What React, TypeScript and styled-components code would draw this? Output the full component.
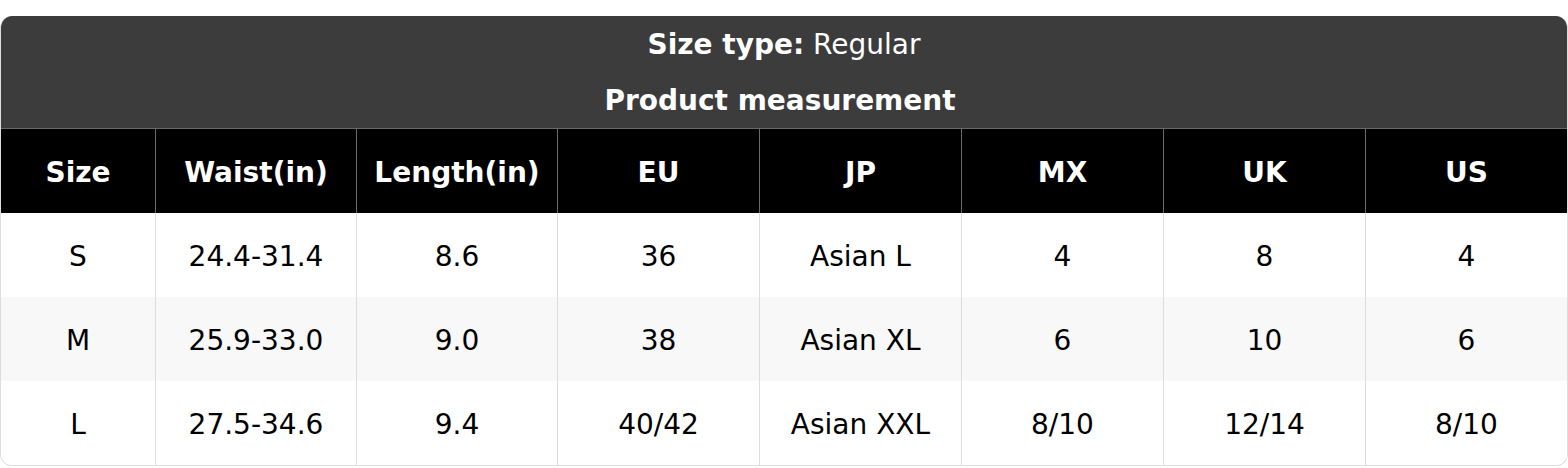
import styled, { createGlobalStyle } from 'styled-components';

const GlobalStyle = createGlobalStyle`
  html, body {
    margin: 0;
    padding: 0;
    background: #ffffff;
  }
  body {
    font-family: "DejaVu Sans", "Liberation Sans", sans-serif;
  }
`;

const columns = ['Size', 'Waist(in)', 'Length(in)', 'EU', 'JP', 'MX', 'UK', 'US'];

const rows = [
  ['S', '24.4-31.4', '8.6', '36', 'Asian L', '4', '8', '4'],
  ['M', '25.9-33.0', '9.0', '38', 'Asian XL', '6', '10', '6'],
  ['L', '27.5-34.6', '9.4', '40/42', 'Asian XXL', '8/10', '12/14', '8/10'],
];

const App = () => {
  return (
    <Page>
      <GlobalStyle />
      <Card>
        <TitleBand>
          <TitleRow>
            <strong>Size type:</strong> Regular
          </TitleRow>
          <TitleRow $divider>
            <strong>Product measurement</strong>
          </TitleRow>
        </TitleBand>
        <Grid>
          {columns.map((c, i) => (
            <HeadCell key={c} $first={i === 0}>
              {c}
            </HeadCell>
          ))}
          {rows.map((row, r) =>
            row.map((v, i) => (
              <BodyCell key={`${r}-${i}`} $first={i === 0} $striped={r % 2 === 1}>
                {v}
              </BodyCell>
            )),
          )}
        </Grid>
      </Card>
    </Page>
  );
};

export default App;

const Page = styled.div`
  padding-top: 16px;
`;

const Card = styled.div`
  width: 100%;
  box-sizing: border-box;
  border: 1px solid #dddddd;
  border-top: 0;
  border-radius: 12px;
  overflow: hidden;
  background: #ffffff;
`;

const TitleBand = styled.div`
  background: #3c3c3c;
  color: #ffffff;
`;

const TitleRow = styled.div<{ $divider?: boolean }>`
  height: 56px;
  box-sizing: ${(p) => (p.$divider ? 'content-box' : 'border-box')};
  display: flex;
  align-items: center;
  justify-content: center;
  font-size: 28px;
  white-space: pre;
  padding-right: ${(p) => (p.$divider ? '8px' : '0')};
  border-bottom: ${(p) => (p.$divider ? '1px solid #6a6a6a' : '0')};

  strong {
    font-weight: bold;
  }
`;

const Grid = styled.div`
  display: grid;
  grid-template-columns: 154px 201px 201px 202px 202px 202px 202px 1fr;
`;

const Cell = styled.div<{ $first?: boolean }>`
  height: 84px;
  box-sizing: border-box;
  display: flex;
  align-items: center;
  justify-content: center;
  font-size: 28px;
  padding-top: 2px;
`;

const HeadCell = styled(Cell)`
  background: #000000;
  color: #ffffff;
  font-weight: bold;
  border-left: ${(p) => (p.$first ? '0' : '1px solid #6a6a6a')};
`;

const BodyCell = styled(Cell)<{ $striped?: boolean }>`
  background: ${(p) => (p.$striped ? '#f8f8f8' : '#ffffff')};
  color: #000000;
  border-left: ${(p) => (p.$first ? '0' : '1px solid #dddddd')};
`;
